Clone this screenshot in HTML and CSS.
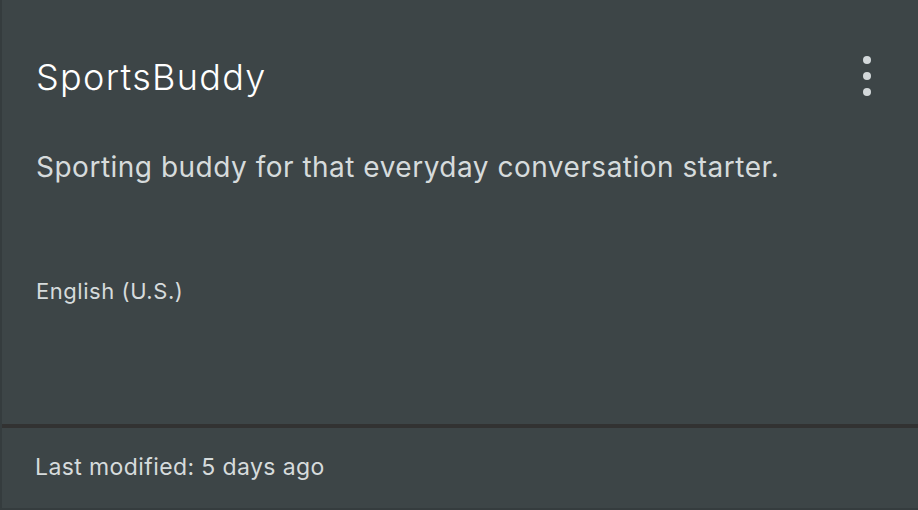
FILE: index.html
```
<!DOCTYPE html>
<html>
<head>
<meta charset="utf-8">
<link rel="stylesheet" href="styles.css">
</head>
<body>
<div class="card">
  <div class="main">
    <div class="head">
      <h1 class="title">SportsBuddy</h1>
      <button class="menu" aria-label="More">
        <svg width="10" height="42" viewBox="0 0 10 42"><circle cx="5" cy="5" r="4"/><circle cx="5" cy="21" r="4"/><circle cx="5" cy="37" r="4"/></svg>
      </button>
    </div>
    <p class="desc">Sporting buddy for that everyday conversation starter.</p>
    <p class="lang">English (U.S.)</p>
  </div>
  <div class="foot">Last modified: 5 days ago</div>
</div>
</body>
</html>
```
FILE: styles.css
```
html, body { margin: 0; padding: 0; }
body { width: 918px; height: 510px; background: #3d4547; font-family: Inter, "Liberation Sans", Arial, sans-serif; overflow: hidden; }
.card { height: 508px; border-left: 2px solid #353c3e; border-bottom: 2px solid #353c3e; background: #3d4547; display: flex; flex-direction: column; }
.main { height: 428px; border-bottom: 4px solid #323232; box-sizing: border-box; padding: 0 0 0 34px; }
.head { display: flex; justify-content: space-between; align-items: flex-start; padding-top: 55px; }
.title { margin: 0; font-size: 36px; font-weight: 300; color: #ffffff; line-height: 44px; letter-spacing: 1.3px; }
.menu { background: none; border: 0; padding: 0; margin: 0 46px 0 0; fill: #d3d8da; display: block; line-height: 0; }
.desc { margin: 51px 0 0; font-size: 28px; font-weight: 400; line-height: 34px; color: #d6dbdc; letter-spacing: 0.5px; }
.lang { margin: 94px 0 0; font-size: 22px; line-height: 26px; color: #d6dbdc; letter-spacing: 0.55px; }
.foot { flex: 1; padding: 25px 0 0 33px; font-size: 23px; line-height: 28px; color: #d6dbdc; box-sizing: border-box; letter-spacing: 0.4px; }
```
